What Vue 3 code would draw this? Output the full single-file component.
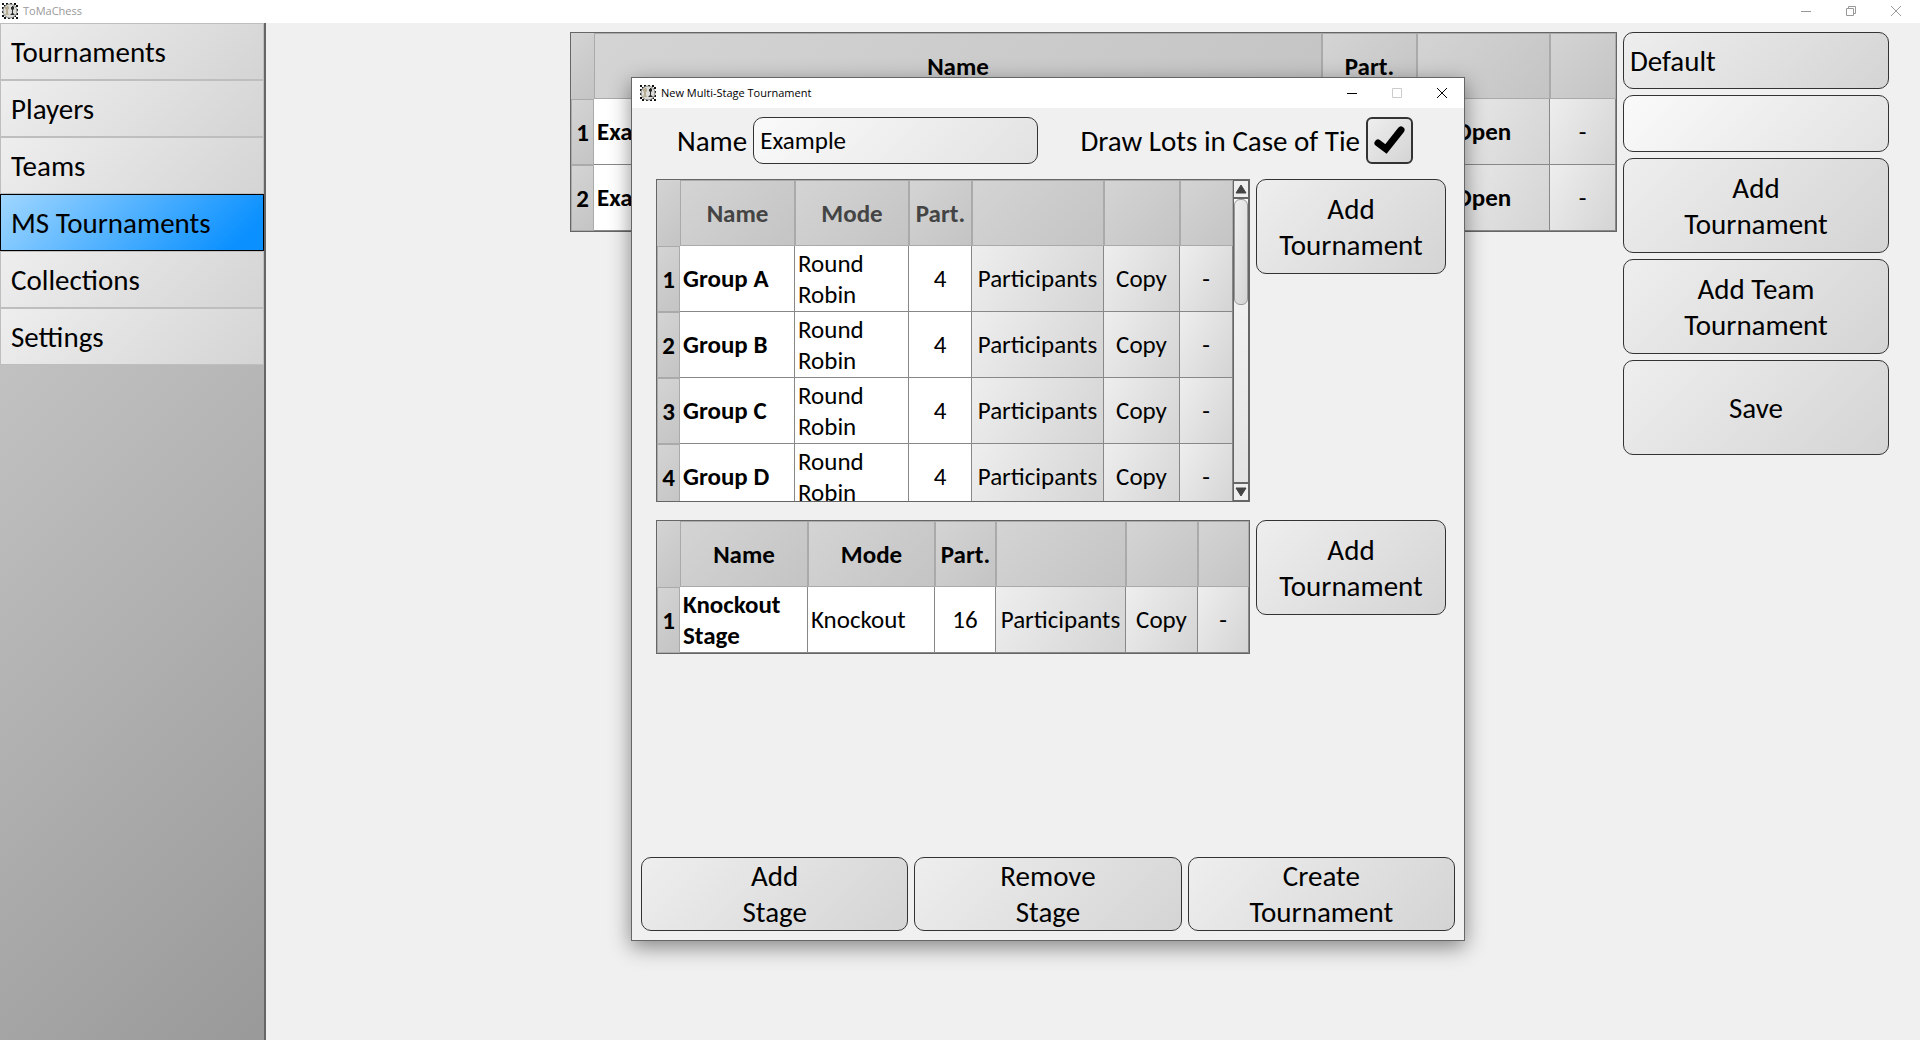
<script setup>
import { ref } from 'vue'

const navItems = ['Tournaments', 'Players', 'Teams', 'MS Tournaments', 'Collections', 'Settings']
const current = ref('MS Tournaments')

const saved = ['Example', 'Example']

const stages = ref([
  {
    locked: true,
    widths: [23, 115, 114, 63, 132, 76, 53],
    rows: ['A', 'B', 'C', 'D'].map((l) => ({ name: 'Group ' + l, mode: 'Round Robin', part: 4 })),
  },
  {
    locked: false,
    widths: [23, 128, 127, 61, 130, 72, 51],
    rows: [{ name: 'Knockout Stage', mode: 'Knockout', part: 16 }],
  },
])

const name = ref('Example')
const search = ref('')
const database = ref('Default')
const drawLots = ref(true)
</script>

<template>
  <div class="app">
    <header class="titlebar main-title">
      <svg class="logo" viewBox="0 0 16 16" aria-hidden="true">
        <path d="M0 1h16M0 5h16M0 9h16M0 13h16" stroke="#111" stroke-width="2" stroke-dasharray="2 2" />
        <path d="M2 3h14M2 7h14M2 11h14M2 15h14" stroke="#111" stroke-width="2" stroke-dasharray="2 2" />
        <circle cx="8" cy="8" r="7" fill="#dcdcd8" stroke="#8a8a86" />
        <path d="M5 3h1l1 1v2l-1 1v3l1 2H3l1-2V7L3 6V4h1z" fill="#b9ae93" />
        <path d="M10 3h1l1 1v2l-1 1v3l2 2H8l2-2V7L9 6V4h1z" fill="#2b2b2b" />
      </svg>
      <span class="caption">ToMaChess</span>
      <button class="wc" aria-label="Minimize"><svg viewBox="0 0 10 10"><path d="M0 5.5h10" /></svg></button>
      <button class="wc" aria-label="Restore"><svg viewBox="0 0 10 10"><path d="M.5 2.5h7v7h-7zM2.5 2.5v-2h7v7h-2" /></svg></button>
      <button class="wc" aria-label="Close"><svg viewBox="0 0 10 10"><path d="M0 0l10 10M10 0L0 10" /></svg></button>
    </header>

    <div class="body">
      <nav class="sidebar">
        <button
          v-for="item in navItems"
          :key="item"
          class="nav"
          :class="{ active: item === current }"
          @click="current = item"
        >{{ item }}</button>
      </nav>

      <main class="content">
        <div class="frame list">
          <table>
            <colgroup>
              <col class="c-index" /><col /><col class="c-part" /><col class="c-open" /><col class="c-remove" />
            </colgroup>
            <thead>
              <tr><td class="corner"></td><th>Name</th><th>Part.</th><th></th><th></th></tr>
            </thead>
            <tbody>
              <tr v-for="(item, i) in saved" :key="i">
                <th>{{ i + 1 }}</th>
                <td class="bold">{{ item }}</td>
                <td></td>
                <td class="act"><button class="bold">Open</button></td>
                <td class="act"><button>-</button></td>
              </tr>
            </tbody>
          </table>
        </div>
        <aside class="actions">
          <select v-model="database" class="box field" aria-label="Collection"><option>Default</option></select>
          <input v-model="search" class="box field light" type="text" aria-label="Search" />
          <button class="box push">Add<br />Tournament</button>
          <button class="box push">Add Team<br />Tournament</button>
          <button class="box push">Save</button>
        </aside>
      </main>
    </div>

    <section class="dialog" role="dialog" aria-label="New Multi-Stage Tournament">
      <header class="titlebar dialog-title">
        <svg class="logo" viewBox="0 0 16 16" aria-hidden="true">
          <path d="M0 1h16M0 5h16M0 9h16M0 13h16" stroke="#111" stroke-width="2" stroke-dasharray="2 2" />
          <path d="M2 3h14M2 7h14M2 11h14M2 15h14" stroke="#111" stroke-width="2" stroke-dasharray="2 2" />
          <circle cx="8" cy="8" r="7" fill="#dcdcd8" stroke="#8a8a86" />
          <path d="M5 3h1l1 1v2l-1 1v3l1 2H3l1-2V7L3 6V4h1z" fill="#b9ae93" />
          <path d="M10 3h1l1 1v2l-1 1v3l2 2H8l2-2V7L9 6V4h1z" fill="#2b2b2b" />
        </svg>
        <span class="caption">New Multi-Stage Tournament</span>
        <button class="wc" aria-label="Minimize"><svg viewBox="0 0 10 10"><path d="M0 5.5h10" /></svg></button>
        <button class="wc" aria-label="Maximize" disabled><svg viewBox="0 0 10 10"><path d="M.5.5h9v9h-9z" /></svg></button>
        <button class="wc" aria-label="Close"><svg viewBox="0 0 10 10"><path d="M0 0l10 10M10 0L0 10" /></svg></button>
      </header>

      <div class="form">
        <div class="pair">
          <label for="ms-name">Name</label>
          <input id="ms-name" v-model="name" class="box name light" type="text" />
        </div>
        <div class="pair">
          <label for="ms-lots">Draw Lots in Case of Tie</label>
          <span class="tick">
            <input id="ms-lots" v-model="drawLots" type="checkbox" />
            <svg v-if="drawLots" viewBox="0 0 47 47"><path d="M12 26L20 32L35 13" /></svg>
          </span>
        </div>
      </div>

      <div v-for="(stage, s) in stages" :key="s" class="stage">
        <div class="frame grid" :class="{ locked: stage.locked }">
          <table>
            <colgroup><col v-for="(w, i) in stage.widths" :key="i" :style="{ width: w + 'px' }" /></colgroup>
            <thead>
              <tr><td class="corner"></td><th>Name</th><th>Mode</th><th>Part.</th><th></th><th></th><th></th></tr>
            </thead>
            <tbody>
              <tr v-for="(row, i) in stage.rows" :key="row.name">
                <th>{{ i + 1 }}</th>
                <td class="bold">{{ row.name }}</td>
                <td>{{ row.mode }}</td>
                <td class="num">{{ row.part }}</td>
                <td class="act"><button>Participants</button></td>
                <td class="act"><button>Copy</button></td>
                <td class="act"><button>-</button></td>
              </tr>
            </tbody>
          </table>
          <div v-if="stage.locked" class="scroll">
            <button class="arrow" aria-label="Scroll up"><svg viewBox="0 0 12 10"><path d="M6 1l5 8H1z" /></svg></button>
            <div class="track"><div class="thumb"></div></div>
            <button class="arrow" aria-label="Scroll down"><svg viewBox="0 0 12 10"><path d="M6 9L1 1h10z" /></svg></button>
          </div>
        </div>
        <button class="box push">Add<br />Tournament</button>
      </div>

      <footer class="foot">
        <button class="box">Add<br />Stage</button>
        <button class="box">Remove<br />Stage</button>
        <button class="box">Create<br />Tournament</button>
      </footer>
    </section>
  </div>
</template>

<style>
body {
  margin: 0;
}
</style>

<style scoped>
.app,
.app * {
  box-sizing: border-box;
}
.app {
  position: relative;
  display: flex;
  flex-direction: column;
  min-height: 100vh;
  background: #f0f0f0;
  color: #000;
  font: 29px/36px Carlito, Lato, sans-serif;
}
button,
input,
select {
  margin: 0;
  color: inherit;
  font: inherit;
  appearance: none;
}

.titlebar {
  display: flex;
  align-items: center;
  background: #fff;
  font: 12px/16px "Open Sans", sans-serif;
  font-size: 11px;
}
.main-title {
  height: 23px;
  padding: 0 2px 2px;
  color: #999;
}
.dialog-title {
  height: 30px;
  padding-left: 8px;
}
.logo {
  width: 16px;
  height: 16px;
}
.caption {
  flex: 1;
  margin-left: 5px;
}
.wc {
  display: flex;
  align-items: center;
  justify-content: center;
  width: 45px;
  height: 20px;
  padding: 0;
  border: 0;
  background: none;
}
.wc svg {
  width: 10px;
  height: 10px;
  fill: none;
  stroke: currentColor;
}
.wc:disabled {
  color: #ccc;
}

.body {
  display: flex;
  flex: 1;
}
.sidebar {
  display: flex;
  flex-direction: column;
  width: 266px;
  border-right: 2px solid #666;
  background: linear-gradient(135deg, #d0d0d0, #999);
}
.nav {
  height: 57px;
  padding: 0 10px;
  border: 1px solid #bebebe;
  background: linear-gradient(135deg, #eee, #d4d4d4);
  text-align: left;
}
.nav.active {
  border-color: #000;
  background: linear-gradient(135deg, #9fd6ff, #0a90ff 90%);
}

.content {
  display: flex;
  flex: 1;
  align-items: flex-start;
  gap: 6px;
  padding: 9px 31px 0 304px;
}
.list {
  flex: 1;
}
.actions {
  display: flex;
  flex-direction: column;
  gap: 6px;
  width: 266px;
}
.box {
  padding: 0;
  border: 1px solid #333;
  border-radius: 10px;
  background: linear-gradient(135deg, #eee, #d4d4d4);
  text-align: center;
}
.light {
  background: linear-gradient(135deg, #fafafa, #e2e2e2);
}
.field {
  width: 100%;
  height: 57px;
  padding: 0 6px;
  text-align: left;
}
.push {
  height: 95px;
}

.frame {
  border: 1px solid #666;
  font-size: 25px;
  line-height: 31px;
}
table {
  width: 100%;
  table-layout: fixed;
  border-collapse: separate;
  border-spacing: 0;
}
.c-index {
  width: 23px;
}
.c-part {
  width: 95px;
}
.c-open {
  width: 133px;
}
.c-remove {
  width: 66px;
}
tr {
  height: 66px;
}
th {
  padding: 0;
  border: 1px solid #aaa;
  background: linear-gradient(135deg, #d4d4d4, #c4c4c4);
}
td {
  padding: 0 3px;
  border: solid #888;
  border-width: 0 1px 1px 0;
  background: #fff;
}
.corner {
  border: 0;
  background: linear-gradient(135deg, #d4d4d4, #c4c4c4);
}
.locked thead th {
  color: #444;
}
.bold {
  font-weight: bold;
}
.num {
  text-align: center;
}
.act {
  height: 66px;
  padding: 0;
}
.act button {
  display: block;
  width: 100%;
  height: 65px;
  padding: 0;
  border: 0;
  background: linear-gradient(120deg, #eee, #d4d4d4);
}

.dialog {
  position: absolute;
  top: 77px;
  left: 631px;
  display: flex;
  flex-direction: column;
  width: 834px;
  min-height: 864px;
  border: 1px solid #666;
  background: #f0f0f0;
  box-shadow: 0 6px 20px rgba(0, 0, 0, 0.45);
}
.form {
  display: flex;
  justify-content: space-between;
  padding: 9px 51px 15px 45px;
}
.pair {
  display: flex;
  align-items: center;
  gap: 6px;
}
.name {
  width: 285px;
  height: 47px;
  padding: 0 6px;
  font-size: 25px;
  text-align: left;
}
.tick {
  display: grid;
}
.tick > * {
  grid-area: 1 / 1;
  width: 47px;
  height: 47px;
}
.tick input {
  border: 2px solid #333;
  border-radius: 6px;
  background: linear-gradient(135deg, #eee, #d4d4d4);
}
.tick svg {
  fill: none;
  stroke: #000;
  stroke-width: 7;
  stroke-linecap: round;
  pointer-events: none;
}
.stage {
  display: flex;
  align-items: flex-start;
  gap: 6px;
  padding: 0 18px 0 24px;
  margin-bottom: 18px;
}
.stage .push {
  width: 190px;
}
.grid {
  display: flex;
  flex: 1;
  max-height: 323px;
  overflow: hidden;
}
.grid table {
  flex: 1;
  align-self: flex-start;
}
.scroll {
  display: flex;
  flex-direction: column;
  width: 16px;
  height: 321px;
  border: 1px solid #666;
  background: #f0f0f0;
}
.arrow {
  display: flex;
  align-items: center;
  justify-content: center;
  height: 18px;
  padding: 0;
  border: 0;
}
.arrow:first-child {
  border-bottom: 2px solid #666;
}
.arrow:last-child {
  border-top: 2px solid #666;
}
.arrow svg {
  width: 12px;
  height: 10px;
  fill: #444;
  stroke: #444;
  stroke-linejoin: round;
}
.track {
  flex: 1;
  background: linear-gradient(135deg, #fafafa, #e2e2e2);
}
.thumb {
  height: 106px;
  border: 1px solid #999;
  border-radius: 6px;
  background: linear-gradient(100deg, #eee, #d4d4d4);
}
.foot {
  display: grid;
  grid-template-columns: repeat(3, 1fr);
  gap: 6px;
  margin-top: auto;
  padding: 0 9px 9px;
}
.foot .box {
  height: 74px;
}
</style>
